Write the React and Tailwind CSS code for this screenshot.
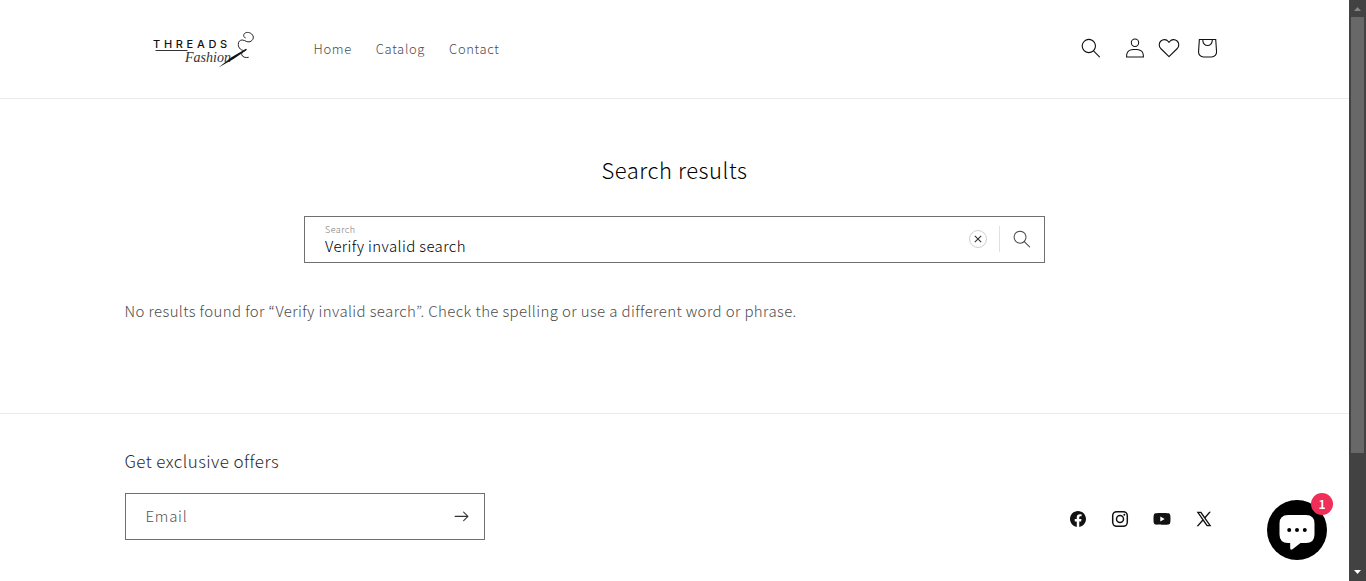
import React from "react";

const SearchIcon = ({ className }) => (
  <svg viewBox="0 0 18 19" fill="currentColor" fillRule="evenodd" className={className} aria-hidden="true">
    <path d="M11.03 11.68A5.784 5.784 0 112.85 3.5a5.784 5.784 0 018.18 8.18zm.26 1.12a6.78 6.78 0 11.72-.7l5.4 5.4a.5.5 0 11-.71.7l-5.41-5.4z" />
  </svg>
);

const AccountIcon = () => (
  <svg viewBox="0 0 18 19" fill="currentColor" fillRule="evenodd" className="size-5" aria-hidden="true">
    <path d="M6 4.5a3 3 0 116 0 3 3 0 01-6 0zm3-4a4 4 0 100 8 4 4 0 000-8zm5.58 12.15c1.12.82 1.83 2.24 1.91 4.85H1.51c.08-2.6.79-4.03 1.9-4.85C4.66 11.75 6.5 11.5 9 11.5s4.35.26 5.58 1.15zM9 10.5c-2.5 0-4.65.24-6.17 1.35C1.27 12.98.5 14.93.5 18v.5h17V18c0-3.07-.77-5.02-2.33-6.15-1.52-1.1-3.67-1.35-6.17-1.35z" />
  </svg>
);

const HeartIcon = () => (
  <svg viewBox="0 0 24 24" fill="none" stroke="currentColor" strokeWidth="1.1" strokeLinejoin="round" className="size-6" aria-hidden="true">
    <path d="M12 20.7 3.700 12.5C1.700 10.3 1.700 7 3.900 5c2.200-2 5.500-1.800 7.400.5l.7.9.7-.9C14.600 3.200 17.900 3 20.100 5c2.200 2 2.200 5.300.2 7.500Z" />
  </svg>
);

const BagIcon = () => (
  <svg viewBox="0 0 40 40" fill="currentColor" fillRule="evenodd" className="size-11" aria-hidden="true">
    <path d="m15.75 11.8h-3.16l-.77 11.6a5 5 0 0 0 4.99 5.34h7.38a5 5 0 0 0 4.99-5.33l-.78-11.61zm0 1h-2.22l-.71 10.67a4 4 0 0 0 3.99 4.27h7.38a4 4 0 0 0 4-4.27l-.72-10.67h-2.22v.63a4.75 4.75 0 1 1 -9.5 0zm8.5 0h-7.5v.63a3.75 3.75 0 1 0 7.5 0z" />
  </svg>
);

const Logo = () => (
  <svg viewBox="0 0 108 40" className="h-10 w-[108px]" role="img" aria-label="Threads Fashion">
    <text x="4" y="19" fontSize="11" fontWeight="500" letterSpacing="3.700" fill="#111" fontFamily="Inter, sans-serif">THREADS</text>
    <path d="M6.500 21.500h32" stroke="#333" strokeWidth="1" />
    <text x="36" y="33" fontSize="14" fontStyle="italic" fill="#333" fontFamily="'Liberation Serif', serif">Fashion</text>
    <path d="M69.500 38.500 82.500 28.300 97 19.800l1 1L84.500 30Z" fill="#111" />
    <path d="M99.700 28.300c-3 .8-6.500-.3-7-2.600-.3-2 1.500-3.500 3.800-4.200-4.200.6-7.200-2.500-7.200-6 0-3 1.700-4.600 4-4.500 3 .2 4.700 2.700 7.700 1.700 3-1.200 4.300-4.200 2.500-6.700-1.900-2.800-6-3.300-8-1.500-1.600 1.700-.8 4 1.200 4.500" fill="none" stroke="#222" strokeWidth="1" />
  </svg>
);

const socials = [
  {
    name: "Facebook",
    icon: <path d="M18 10.049C18 5.603 14.419 2 10 2c-4.419 0-8 3.603-8 8.049C2 14.067 4.925 17.396 8.75 18v-5.624H6.719v-2.328h2.03V8.275c0-2.017 1.195-3.132 3.023-3.132.874 0 1.79.158 1.79.158v1.98h-1.009c-.994 0-1.303.621-1.303 1.258v1.51h2.219l-.355 2.326H11.25V18c3.825-.604 6.75-3.933 6.75-7.951Z" />,
  },
  {
    name: "Instagram",
    icon: (
      <>
        <rect x="2.700" y="2.700" width="14.600" height="14.600" rx="4" fill="none" stroke="currentColor" strokeWidth="1.500" />
        <circle cx="10" cy="10" r="3.500" fill="none" stroke="currentColor" strokeWidth="1.500" />
        <circle cx="14.300" cy="5.700" r="1" />
      </>
    ),
  },
  {
    name: "YouTube",
    icon: <path d="M18.16 5.87c.34 1.309.34 4.08.34 4.08s0 2.771-.34 4.08a2.125 2.125 0 0 1-1.53 1.53c-1.309.34-6.63.34-6.63.34s-5.321 0-6.63-.34a2.125 2.125 0 0 1-1.53-1.53c-.34-1.309-.34-4.08-.34-4.08s0-2.771.34-4.08a2.173 2.173 0 0 1 1.53-1.53C4.679 4 10 4 10 4s5.321 0 6.63.34a2.173 2.173 0 0 1 1.53 1.53ZM8.3 12.5l4.42-2.55L8.3 7.4v5.1Z" />,
  },
  {
    name: "X",
    icon: <path d="M7.273 2.8 10.8 7.822 15.218 2.8h1.768l-5.4 6.139 5.799 8.254h-4.658l-3.73-5.31-4.671 5.31H2.558l5.654-6.427L2.615 2.8h4.658Zm6.242 13.125L5.07 4.109h1.405l8.446 11.816h-1.405Z" />,
  },
];

function Header() {
  return (
    <header className="border-b border-[#ececec]">
      <div className="mx-auto flex h-[98px] max-w-[1200px] items-center px-[50px]">
        <a href="#home" className="ml-6">
          <Logo />
        </a>
        <nav className="ml-[57px] flex gap-6 text-[13px] leading-5 tracking-wider text-[#4d4d4d]">
          <a href="#home">Home</a>
          <a href="#catalog">Catalog</a>
          <a href="#contact">Contact</a>
        </nav>
        <div className="-mr-1 ml-auto flex items-center pb-0.5">
          <button type="button" aria-label="Search" className="grid size-11 place-items-center">
            <SearchIcon className="size-5" />
          </button>
          <a href="#account" aria-label="Log in" className="grid size-11 place-items-center">
            <AccountIcon />
          </a>
          <a href="#wishlist" aria-label="Wishlist" className="mr-1">
            <HeartIcon />
          </a>
          <a href="#cart" aria-label="Cart">
            <BagIcon />
          </a>
        </div>
      </div>
    </header>
  );
}

function SearchForm() {
  return (
    <form role="search" className="mx-auto mt-[31px] flex h-[47px] max-w-[741px] items-center border border-[#707070]">
      <div className="flex flex-1 flex-col pl-5">
        <label htmlFor="query" className="text-[9px] leading-3 tracking-wider text-[#777]">Search</label>
        <input id="query" type="text" defaultValue="Verify invalid search" className="h-5 w-full text-[15px] leading-5 tracking-wide text-black outline-none" />
      </div>
      <div className="flex items-center pb-0.5">
        <button type="reset" aria-label="Clear search term" className="mr-3 grid size-[18px] place-items-center rounded-full border border-[#d0d0d0]">
          <svg viewBox="0 0 8 8" className="size-2" stroke="#333" strokeWidth="1.100" aria-hidden="true">
            <path d="m.8.8 6.400 6.400M7.200.8.8 7.200" />
          </svg>
        </button>
        <button type="submit" aria-label="Search" className="grid h-[26px] w-[45px] place-items-center border-l border-[#e0e0e0] text-[#444]">
          <SearchIcon className="size-[18px]" />
        </button>
      </div>
    </form>
  );
}

function Footer() {
  return (
    <footer className="border-t border-[#ececec]">
      <div className="mx-auto flex max-w-[1200px] items-end justify-between px-[50px] pt-[35px] pb-10">
        <form className="w-[360px]">
          <h2 className="text-[17px] leading-6 tracking-wide text-[#2a2a2a]">Get exclusive offers</h2>
          <div className="mt-5 flex h-[47px] items-center border border-[#707070]">
            <input type="email" aria-label="Email" placeholder="Email" className="h-6 min-w-0 flex-1 pb-0.5 pl-5 text-[15px] leading-6 tracking-wider outline-none placeholder:text-[#555]" />
            <button type="submit" aria-label="Subscribe" className="grid size-11 place-items-center text-[#333]">
              <svg viewBox="0 0 14 10" fill="currentColor" className="w-[15px]" aria-hidden="true">
                <path d="M8.537.808a.5.5 0 01.817-.162l4 4a.5.5 0 010 .708l-4 4a.5.5 0 11-.708-.708L11.793 5.5H1a.5.5 0 010-1h10.793L8.646 1.354a.5.5 0 01-.109-.546z" />
              </svg>
            </button>
          </div>
        </form>
        <ul className="flex">
          {socials.map(({ name, icon }) => (
            <li key={name}>
              <a href={"#" + name.toLowerCase()} aria-label={name} className="grid size-[42px] place-items-center">
                <svg viewBox="0 0 20 20" fill="currentColor" fillRule="evenodd" className="size-5" aria-hidden="true">{icon}</svg>
              </a>
            </li>
          ))}
        </ul>
      </div>
    </footer>
  );
}

function ChatButton() {
  return (
    <button type="button" aria-label="Open chat, 1 unread" className="fixed right-[39px] bottom-[21px] grid size-[60px] place-items-center rounded-full bg-black">
      <svg viewBox="0 0 36 40" className="h-10 w-9" aria-hidden="true">
        <path d="M9 5h18q8.500 0 8.500 8.500v11q0 8.500-8.500 8.500h-5.500l-8 6.200q-2.300 1.400-2.300-1.300v-4.900H9Q.5 33 .5 24.500v-11Q.5 5 9 5Z" fill="#fff" />
        <g fill="#000">
          <circle cx="10.200" cy="20" r="2" />
          <circle cx="18" cy="20" r="2" />
          <circle cx="25.800" cy="20" r="2" />
        </g>
      </svg>
      <span className="absolute -top-[7px] -right-[6px] grid size-[22px] place-items-center rounded-full bg-[#ef2f58] text-xs leading-4 font-bold text-white">1</span>
    </button>
  );
}

function ScrollBar() {
  return (
    <div aria-hidden="true" className="sticky top-0 flex h-screen w-[17px] shrink-0 flex-col items-center bg-[#424242]">
      <svg viewBox="0 0 17 17" className="size-[17px] shrink-0"><path d="M5 11h7L8.500 7Z" fill="#868686" /></svg>
      <div className="h-3/4 w-[13px] bg-[#686868]" />
      <svg viewBox="0 0 17 17" className="mt-auto size-[17px] shrink-0"><path d="M5 6h7L8.500 10Z" fill="#fff" /></svg>
    </div>
  );
}

export default function App() {
  return (
    <div lang="en" className="flex min-h-screen bg-white font-['Noto_Sans_CJK_KR','Noto_Sans',sans-serif] font-light text-[#121212]">
      <div className="min-w-0 flex-1">
        <Header />
        <main className="mx-auto max-w-[1200px] px-[50px] pt-[54px] pb-[90px]">
          <h1 className="text-center text-[22px] leading-8 tracking-wide text-black">Search results</h1>
          <SearchForm />
          <p className="mt-9 text-[15px] leading-6 tracking-wide text-[#4d4d4d]">
            No results found for “Verify invalid search”. Check the spelling or use a different word or phrase.
          </p>
        </main>
        <Footer />
      </div>
      <ScrollBar />
      <ChatButton />
    </div>
  );
}
